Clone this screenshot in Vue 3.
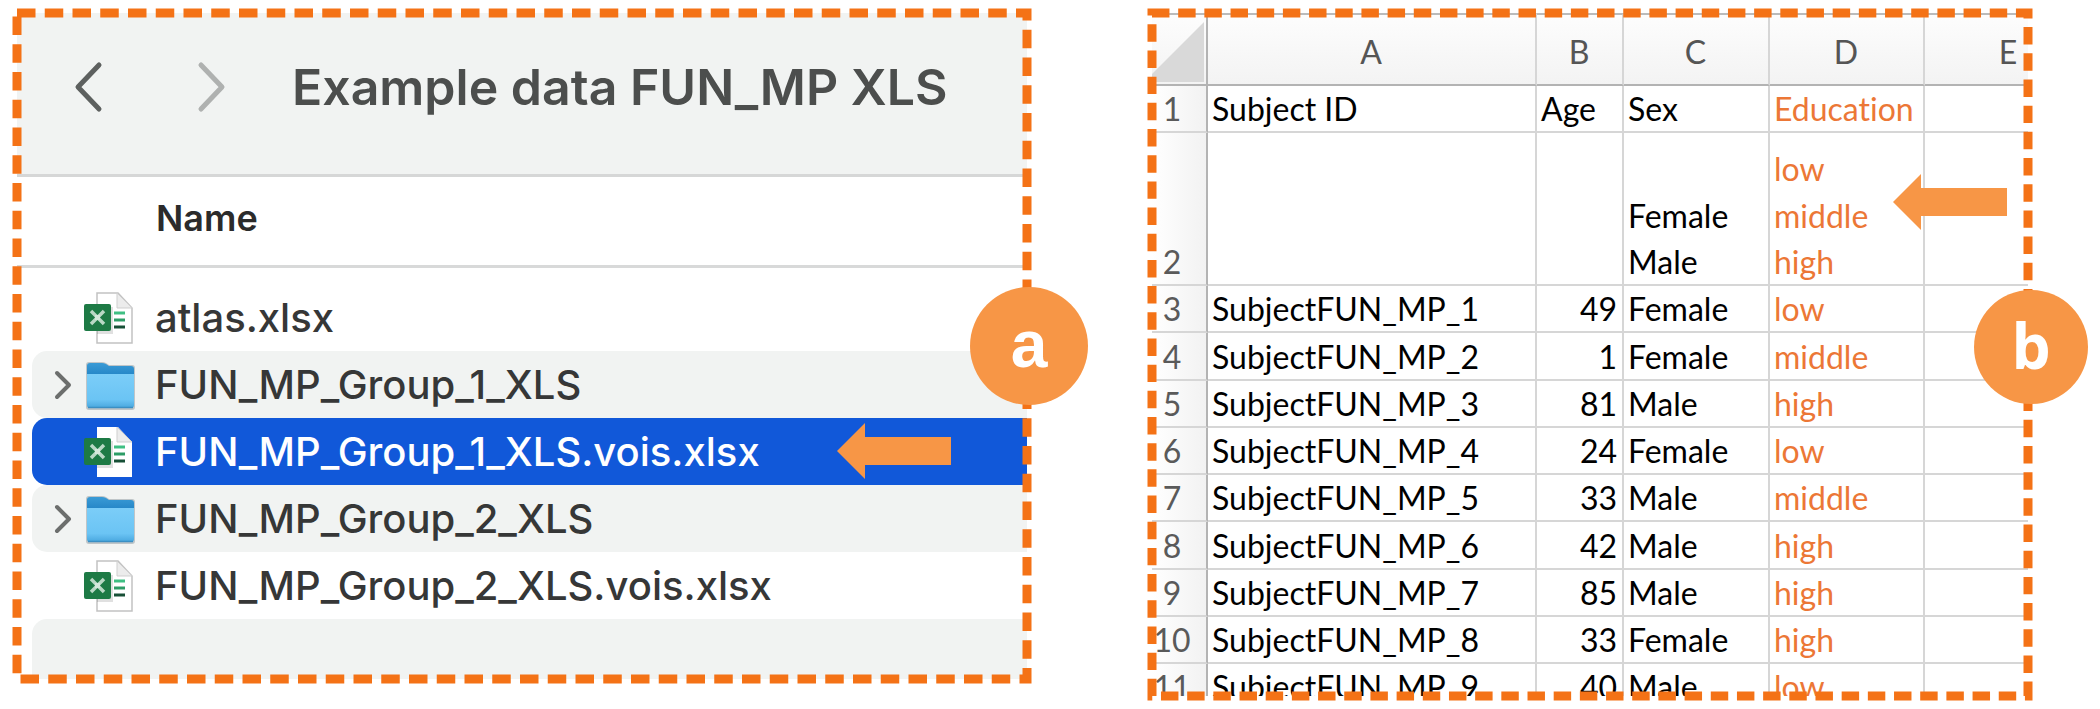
<script setup>
const files = [
  { name: 'atlas.xlsx', kind: 'sheet' },
  { name: 'FUN_MP_Group_1_XLS', kind: 'folder' },
  { name: 'FUN_MP_Group_1_XLS.vois.xlsx', kind: 'sheet', selected: true },
  { name: 'FUN_MP_Group_2_XLS', kind: 'folder' },
  { name: 'FUN_MP_Group_2_XLS.vois.xlsx', kind: 'sheet' },
]

const rows = [
  { id: ['Subject ID'], age: 'Age', sex: ['Sex'], education: ['Education'] },
  { id: [], age: '', sex: ['Female', 'Male'], education: ['low', 'middle', 'high'] },
  { id: ['SubjectFUN_MP_1'], age: 49, sex: ['Female'], education: ['low'] },
  { id: ['SubjectFUN_MP_2'], age: 1, sex: ['Female'], education: ['middle'] },
  { id: ['SubjectFUN_MP_3'], age: 81, sex: ['Male'], education: ['high'] },
  { id: ['SubjectFUN_MP_4'], age: 24, sex: ['Female'], education: ['low'] },
  { id: ['SubjectFUN_MP_5'], age: 33, sex: ['Male'], education: ['middle'] },
  { id: ['SubjectFUN_MP_6'], age: 42, sex: ['Male'], education: ['high'] },
  { id: ['SubjectFUN_MP_7'], age: 85, sex: ['Male'], education: ['high'] },
  { id: ['SubjectFUN_MP_8'], age: 33, sex: ['Female'], education: ['high'] },
  { id: ['SubjectFUN_MP_9'], age: 40, sex: ['Male'], education: ['low'] },
]
</script>

<template>
  <main class="page">
    <section class="panel finder">
      <div class="content">
        <header class="toolbar">
          <button class="nav" type="button" aria-label="Back">
            <svg width="32" height="52" viewBox="0 0 32 52"><path d="M27 4 6 26l21 22" /></svg>
          </button>
          <button class="nav forward" type="button" aria-label="Forward">
            <svg width="32" height="52" viewBox="0 0 32 52"><path d="M5 4l21 22L5 48" /></svg>
          </button>
          <h1 class="title">Example data FUN_MP XLS</h1>
        </header>
        <div class="list-head">Name</div>
        <ul class="files">
          <li
            v-for="(file, i) in files"
            :key="file.name"
            class="file"
            :class="{ striped: i % 2 === 1, selected: file.selected }"
          >
            <span class="toggle-slot">
              <button v-if="file.kind === 'folder'" class="toggle" type="button" :aria-label="'Expand ' + file.name">
                <svg width="20" height="32" viewBox="0 0 20 32"><path d="M4 4l12 12L4 28" /></svg>
              </button>
            </span>
            <svg v-if="file.kind === 'folder'" class="icon" width="54" height="60" viewBox="0 0 54 60">
              <defs>
                <linearGradient id="folder-back" x1="0" y1="0" x2="0" y2="1">
                  <stop offset="0" stop-color="#3a9bd6" />
                  <stop offset="1" stop-color="#1878bd" />
                </linearGradient>
                <linearGradient id="folder-front" x1="0" y1="0" x2="0" y2="1">
                  <stop offset="0" stop-color="#7bcdf8" />
                  <stop offset=".75" stop-color="#6bc4f4" />
                  <stop offset="1" stop-color="#48a6de" />
                </linearGradient>
              </defs>
              <path d="M3 10q0-3 3-3h13q2 0 4 1l3 2h23q3 0 3 3v39q0 3-3 3H6q-3 0-3-3z" fill="#8d979d" opacity=".5" />
              <path d="M4 11q0-3 3-3h12q2 0 4 1l3 2h22q3 0 3 3v14H4z" fill="url(#folder-back)" />
              <path d="M4 19h47v31q0 3-3 3H7q-3 0-3-3z" fill="url(#folder-front)" />
              <path d="M5 52.500h45" stroke="#3a8fc4" stroke-width="1.500" />
            </svg>
            <svg v-else class="icon" width="54" height="60" viewBox="0 0 54 60">
              <path d="M14 5h21l14 15v35H14z" fill="#fff" stroke="#c2c2c2" stroke-width="1.500" :stroke-opacity="file.selected ? 0 : 1" />
              <path d="M34 5v15h15z" fill="#ececec" stroke="#cfcfcf" stroke-width="1" stroke-linejoin="round" />
              <path d="M14 19h16v27H14z" fill="#000" opacity=".12" />
              <path d="M31 25h11" stroke="#3fbf83" stroke-width="3" />
              <path d="M31 32h11" stroke="#2d9c66" stroke-width="3" />
              <path d="M31 39h11" stroke="#174f36" stroke-width="3" />
              <rect x="1" y="16" width="27" height="27" rx="2" fill="#1d7a45" />
              <path d="M8 23l13 13M21 23L8 36" stroke="#b9d8c5" stroke-width="3.500" />
              <path d="M12 27h5v5h-5z" fill="#d5e8dc" />
            </svg>
            <span class="name">{{ file.name }}</span>
          </li>
          <li class="file filler striped" aria-hidden="true"></li>
        </ul>
      </div>
      <svg class="frame" aria-hidden="true">
        <rect width="100%" height="100%" stroke-dasharray="18.5 9.250" />
      </svg>
      <svg class="arrow" width="114" height="56" viewBox="0 0 114 56" aria-hidden="true">
        <path d="M0 28 28 0v14h86v28H28v14z" />
      </svg>
      <div class="badge">a</div>
    </section>

    <section class="panel sheet">
      <div class="content">
        <table class="grid">
          <colgroup>
            <col class="col-num" />
            <col />
            <col class="col-b" />
            <col class="col-c" />
            <col class="col-d" />
            <col class="col-e" />
          </colgroup>
          <thead>
            <tr>
              <td class="corner">
                <svg width="52" height="60" viewBox="0 0 52 60" aria-hidden="true"><path d="M0 52 52 0v60H0z" fill="#d9d9d9" /></svg>
              </td>
              <th v-for="c in ['A', 'B', 'C', 'D', 'E']" :key="c" scope="col">{{ c }}</th>
            </tr>
          </thead>
          <tbody>
            <tr v-for="(row, i) in rows" :key="i" :class="{ tall: i === 1 }">
              <th scope="row">{{ i + 1 }}</th>
              <td><div v-for="t in row.id" :key="t">{{ t }}</div></td>
              <td :class="{ number: i > 1 }">{{ row.age }}</td>
              <td><div v-for="t in row.sex" :key="t">{{ t }}</div></td>
              <td class="education"><div v-for="t in row.education" :key="t">{{ t }}</div></td>
              <td></td>
            </tr>
          </tbody>
        </table>
      </div>
      <svg class="frame" aria-hidden="true">
        <rect width="100%" height="100%" stroke-dasharray="17.450 8.730" />
      </svg>
      <svg class="arrow" width="114" height="56" viewBox="0 0 114 56" aria-hidden="true">
        <path d="M0 28 28 0v14h86v28H28v14z" />
      </svg>
      <div class="badge">b</div>
    </section>
  </main>
</template>

<style>
body {
  background: #fff;
}
</style>

<style scoped>
.page {
  box-sizing: border-box;
  height: 100vh;
  padding: 13px 72px 13px 17px;
  display: grid;
  grid-template-columns: 1010fr 876fr;
  gap: 125px;
}
.panel {
  position: relative;
  min-width: 0;
  min-height: 0;
}
.content {
  height: 100%;
  overflow: hidden;
}
.frame {
  position: absolute;
  inset: 0;
  width: 100%;
  height: 100%;
  overflow: visible;
  pointer-events: none;
}
.frame rect {
  fill: none;
  stroke: #f47216;
  stroke-width: 9px;
}
.arrow {
  position: absolute;
  fill: #f79646;
}
.badge {
  position: absolute;
  box-sizing: border-box;
  padding-bottom: 4px;
  display: flex;
  align-items: center;
  justify-content: center;
  border-radius: 50%;
  background: #f79646;
  color: #fff;
  font-weight: 700;
}

/* file browser */
.finder {
  margin-bottom: 17px;
  font-family: Inter, "Liberation Sans", sans-serif;
}
.finder .content {
  display: flex;
  flex-direction: column;
}
.finder .arrow {
  top: 410px;
  right: 76px;
}
.finder .badge {
  top: 274px;
  right: -61px;
  width: 118px;
  height: 118px;
  font-family: "Liberation Sans", Arial, sans-serif;
  font-size: 66px;
  line-height: 66px;
}
.toolbar {
  box-sizing: border-box;
  height: 164px;
  padding: 0 0 14px 55px;
  display: flex;
  align-items: center;
  background: #f1f3f2;
  border-bottom: 3px solid #d6d7d7;
}
button {
  padding: 0;
  border: 0;
  background: none;
  display: flex;
}
button path {
  fill: none;
  stroke: #5d605f;
  stroke-width: 5px;
  stroke-linecap: round;
  stroke-linejoin: round;
}
.nav {
  margin-right: 92px;
}
.nav.forward {
  margin-right: 64px;
}
.nav.forward path {
  stroke: #afb1b0;
}
.toggle path {
  stroke: #6c6e6d;
  stroke-width: 4px;
}
.title {
  margin: 0;
  font-size: 50px;
  line-height: 60px;
  font-weight: 600;
  color: #4c4e4d;
  white-space: nowrap;
}
.list-head {
  box-sizing: border-box;
  height: 91px;
  padding-left: 139px;
  border-bottom: 3px solid #d8d9d9;
  font-size: 36px;
  line-height: 82px;
  font-weight: 600;
  color: #2b2b2b;
}
.files {
  flex: 1;
  margin: 0;
  padding: 16px 0 0 15px;
  list-style: none;
  display: flex;
  flex-direction: column;
}
.file {
  height: 67px;
  flex: none;
  display: flex;
  align-items: center;
  border-radius: 15px 0 0 15px;
  font-size: 40px;
  line-height: 67px;
  font-weight: 500;
  color: #363737;
  white-space: nowrap;
}
.striped {
  background: #f1f3f2;
}
.selected {
  background: #1158d9;
  color: #fff;
}
.filler {
  flex: 1;
  height: auto;
  border-radius: 15px 0 0 0;
}
.toggle-slot {
  width: 51px;
  padding-left: 21px;
  box-sizing: border-box;
}
.icon {
  margin-right: 18px;
}

/* spreadsheet */
.sheet {
  font-family: Lato, Carlito, sans-serif;
  font-variant-ligatures: none;
}
.sheet .arrow {
  top: 161px;
  right: 21px;
}
.sheet .badge {
  top: 277px;
  right: -60px;
  width: 114px;
  height: 114px;
  font-family: "Open Sans", "Noto Sans", sans-serif;
  font-size: 62px;
  line-height: 62px;
}
.grid {
  width: calc(100% + 66px);
  table-layout: fixed;
  border-collapse: separate;
  border-spacing: 0;
  font-size: 32px;
  line-height: 45px;
  color: #000;
}
.col-num { width: 56px; }
.col-b { width: 87px; }
.col-c { width: 146px; }
.col-d { width: 155px; }
.col-e { width: 169px; }
.grid th,
.grid td {
  box-sizing: border-box;
  height: 47px;
  padding: 0 5px 0 4px;
  border-right: 2px solid #d6d6d6;
  border-bottom: 2px solid #d6d6d6;
  text-align: left;
  vertical-align: bottom;
  font-weight: 400;
  white-space: nowrap;
}
.grid tbody tr:nth-child(4n) td {
  height: 48px;
}
.grid tbody div {
  line-height: 47px;
}
.grid tbody div:last-child {
  line-height: 45px;
}
.grid .tall td,
.grid .tall th {
  height: 153px;
}
.grid thead th,
.grid .corner {
  height: 73px;
  border-top: 2px solid #bbb;
  border-bottom-color: #b3b3b3;
  background: linear-gradient(#fdfdfd, #f3f3f3);
  text-align: center;
  vertical-align: middle;
  color: #555;
}
.grid thead th {
  padding-top: 4px;
}
.grid .corner {
  padding: 0;
  border-right-color: #b3b3b3;
}
.corner svg {
  display: block;
  margin-top: 4px;
}
.grid tbody th {
  padding: 0 14px 0 0;
  border-right-color: #b3b3b3;
  background: linear-gradient(90deg, #fff, #f2f2f2);
  text-align: center;
  color: #5a5a5a;
}
.grid .number {
  text-align: right;
}
.grid .education {
  color: #ec7736;
}
</style>
